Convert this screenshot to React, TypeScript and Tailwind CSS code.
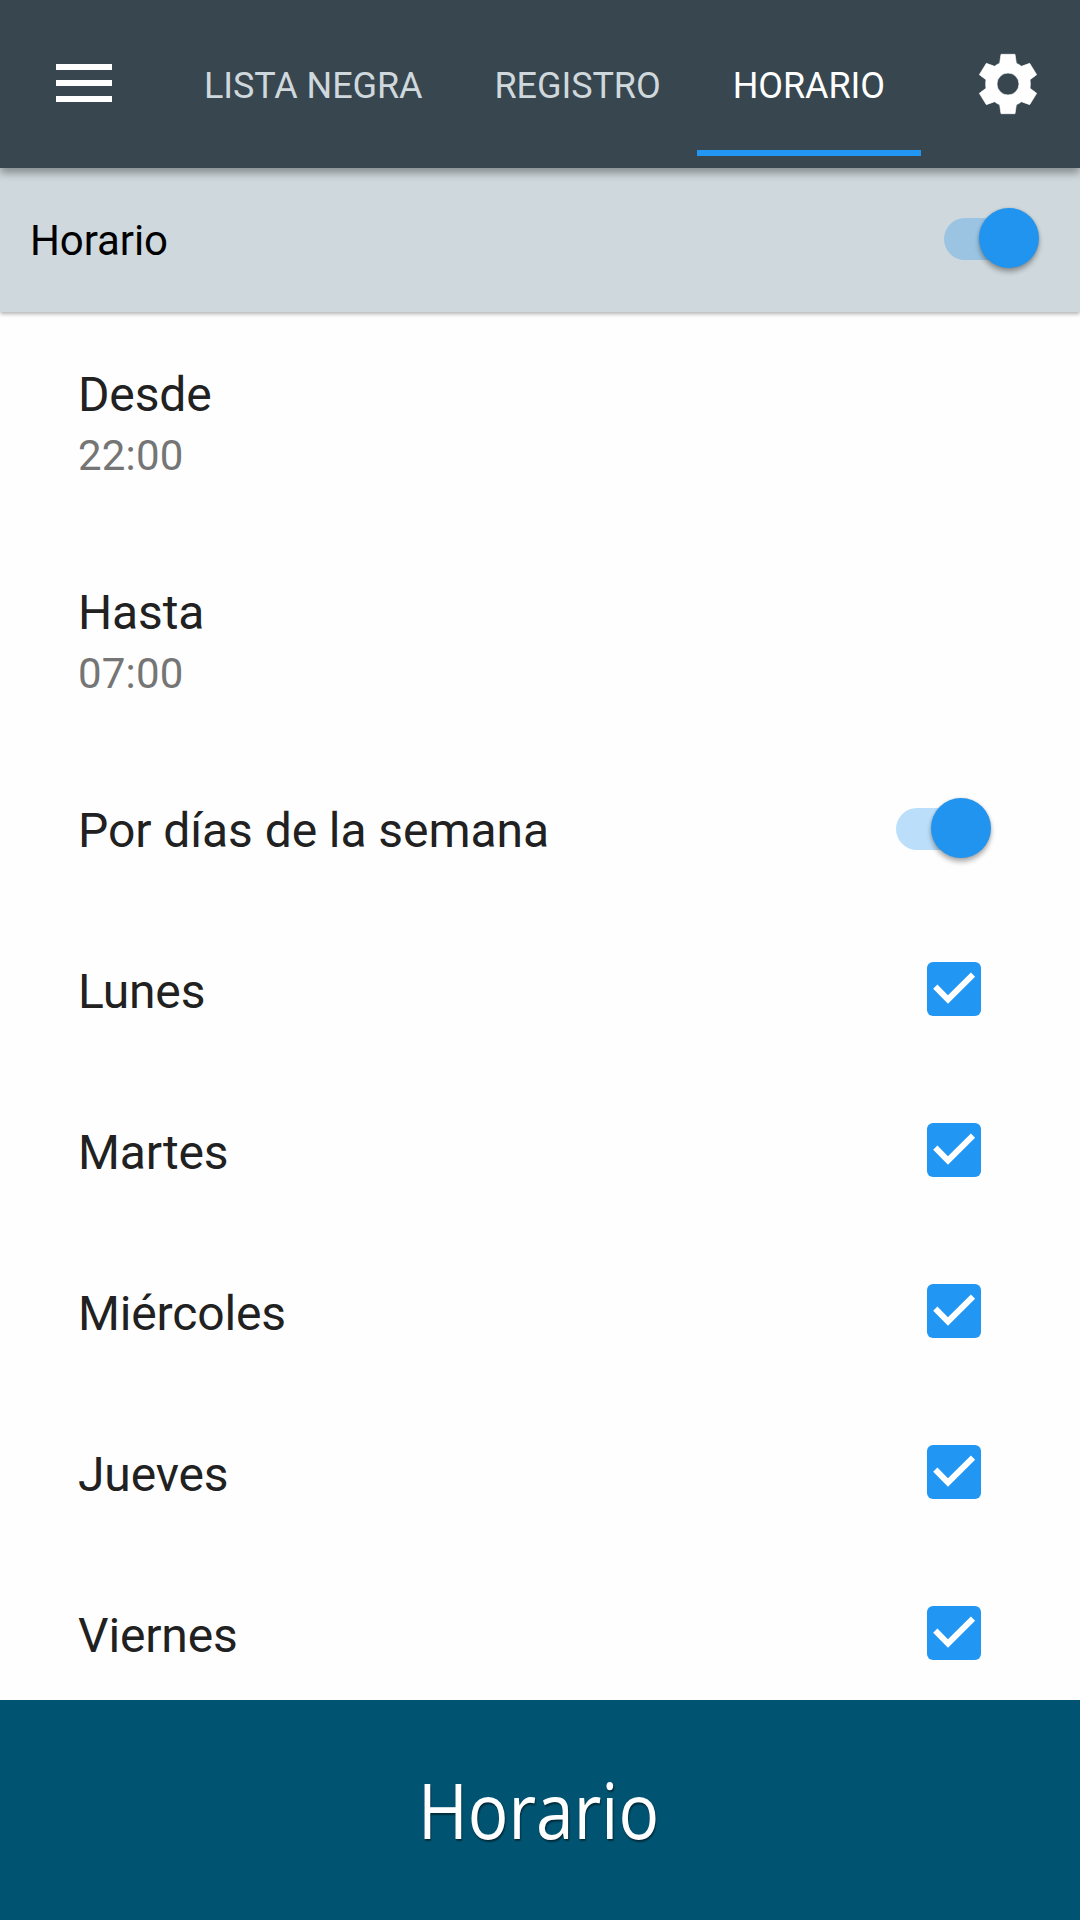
import { useState } from "react";

const tabs = ["LISTA NEGRA", "REGISTRO", "HORARIO"];
const days = ["Lunes", "Martes", "Miércoles", "Jueves", "Viernes"];

const GearIcon = () => (
  <svg className="h-[62px] w-[60px]" viewBox="54 39 180 186" fill="#fff">
    <path
      fillRule="evenodd"
      stroke="#fff"
      strokeWidth="2"
      strokeLinejoin="round"
      d="M123 43H165L169 70Q177 73 184 79L209 70L230 104L210 119Q212 132 210 145L230 160L209 194L184 185Q177 191 169 194L165 221H123L119 194Q111 191 104 185L79 194L58 160L78 145Q76 132 78 119L58 104L79 70L104 79Q111 73 119 70ZM144 99a33 33 0 1 0 0 66a33 33 0 1 0 0-66Z"
    />
  </svg>
);

const Switch = ({ on, onClick }: { on: boolean; onClick: () => void }) => (
  <button
    className="relative mb-[2px] flex h-[42px] w-[96px] items-center"
    role="switch"
    aria-checked={on}
    onClick={onClick}
  >
    <span className={`h-[42px] w-[84px] rounded-full ${on ? "bg-[#2196f3]/30" : "bg-black/25"}`} />
    <span
      className={`absolute top-[-10px] size-[60px] rounded-full shadow-[0_4px_5px_rgba(0,0,0,0.3),0_0_3px_rgba(0,0,0,0.15)] ${
        on ? "right-px bg-[#2194ef]" : "left-0 bg-[#fafafa]"
      }`}
    />
  </button>
);

const Checkbox = ({ checked }: { checked: boolean }) => (
  <span
    className={`mb-[4px] flex size-[54px] items-center justify-center rounded-[6px] ${
      checked ? "bg-[#2196f3]" : "border-6 border-[#757575]"
    }`}
  >
    {checked && (
      <svg className="size-[54px]" viewBox="0 0 54 54" fill="none">
        <path d="M8.3 24.7 L21 37.5 L46 12.7" stroke="#fff" strokeWidth="6" />
      </svg>
    )}
  </span>
);

const TimeRow = ({ label, time }: { label: string; time: string }) => (
  <div className="flex h-[218px] flex-col px-[78px] pt-[54px]">
    <p className="text-[48px] leading-[56px] tracking-[-0.15px] text-[#212121]">{label}</p>
    <p className="mt-[5px] text-[42px] leading-[56px] tracking-[0.2px] text-[#757575]">{time}</p>
  </div>
);

export default function App() {
  const [active, setActive] = useState("HORARIO");
  const [enabled, setEnabled] = useState(true);
  const [byDay, setByDay] = useState(true);
  const [checked, setChecked] = useState<string[]>(days);

  const toggleDay = (day: string) => {
    setChecked(
      checked.includes(day) ? checked.filter((d) => d !== day) : [...checked, day]
    );
  };

  return (
    <div className="flex h-[1920px] w-[1080px] flex-col overflow-hidden bg-[#fefefe] font-[Roboto,sans-serif]">
      {/* Top bar */}
      <header className="z-20 flex h-[168px] shrink-0 bg-[#38464f] pr-[42px] pl-[56px] shadow-[0_5px_8px_rgba(0,0,0,0.35)]">
        <button className="flex w-[56px] flex-col gap-[10px] pt-[64px]">
          <span className="h-[6px] w-full bg-white" />
          <span className="h-[6px] w-full bg-white" />
          <span className="h-[6px] w-full bg-white" />
        </button>
        <nav className="ml-[56px] flex">
          {tabs.map((tab) => (
            <button
              key={tab}
              onClick={() => setActive(tab)}
              className={`mb-[12px] border-b-[6px] px-[36px] pt-[21px] text-[36px] tracking-[-0.08px] ${
                tab === active
                  ? "border-[#2196f3] text-white"
                  : "border-transparent text-[#cfd8dc]"
              }`}
            >
              {tab}
            </button>
          ))}
        </nav>
        <button className="ml-auto">
          <GearIcon />
        </button>
      </header>

      <section className="z-10 flex h-[144px] shrink-0 items-center justify-between bg-[#cfd8dc] pr-[40px] pl-[30px] shadow-[0_2px_4px_rgba(0,0,0,0.3)]">
        <h1 className="pt-[2px] text-[42px] leading-[50px] tracking-[-0.1px] text-black">Horario</h1>
        <Switch on={enabled} onClick={() => setEnabled(!enabled)} />
      </section>

      <main className="min-h-0 flex-1 overflow-hidden pt-px">
        <TimeRow label="Desde" time="22:00" />
        <TimeRow label="Hasta" time="07:00" />
        <div className="flex h-[161px] items-center justify-between pr-[88px] pl-[78px]">
          <p className="pt-[2px] text-[48px] tracking-[-0.07px] text-[#212121]">
            Por días de la semana
          </p>
          <Switch on={byDay} onClick={() => setByDay(!byDay)} />
        </div>
        {days.map((day) => (
          <div
            key={day}
            onClick={() => toggleDay(day)}
            className="flex h-[161px] items-center justify-between pr-[99px] pl-[78px]"
          >
            <p className="pt-[2px] text-[48px] tracking-[-0.15px] text-[#212121]">{day}</p>
            <Checkbox checked={checked.includes(day)} />
          </div>
        ))}
      </main>

      <footer className="flex h-[220px] shrink-0 items-center justify-center bg-[#005472] pr-[3px]">
        <p className="scale-x-[0.89] font-['Open_Sans',sans-serif] text-[76px] text-white [text-shadow:1px_2px_2px_rgba(0,0,0,0.5)]">
          Horario
        </p>
      </footer>
    </div>
  );
}
